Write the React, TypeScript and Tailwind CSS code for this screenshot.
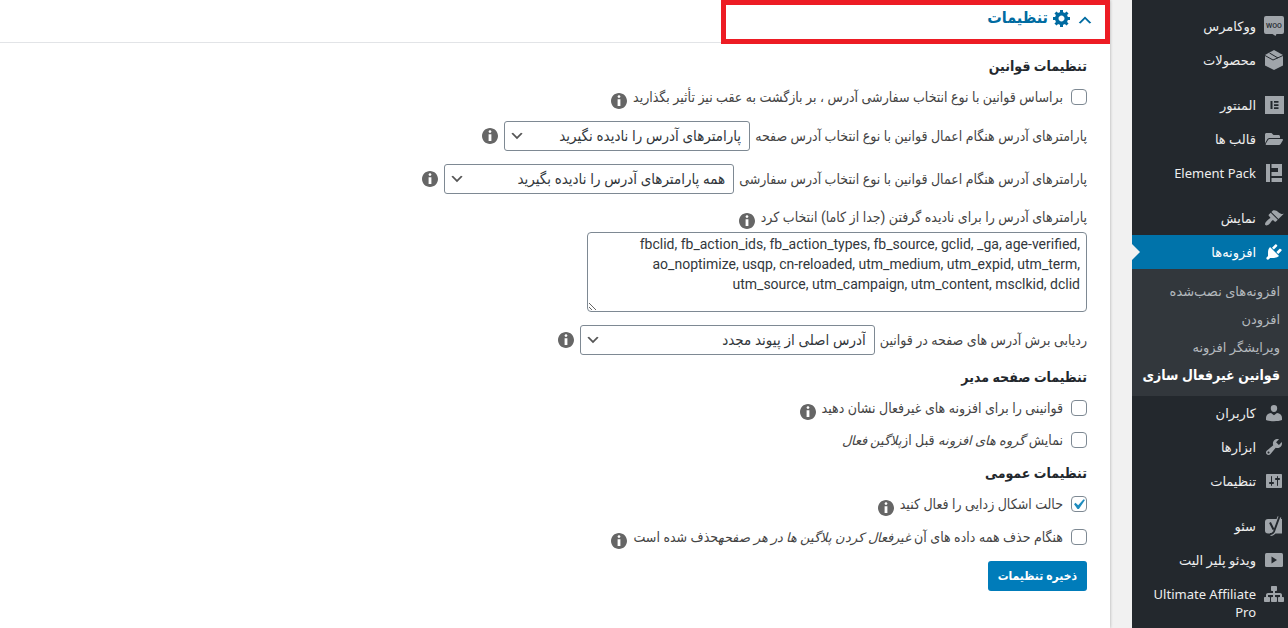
import React from 'react';
import { FaFolderOpen } from 'react-icons/fa';

const dashicons = {
  appearance:
    'M14.48 11.06L7.41 3.99l1.5-1.5c.5-.56 2.3-.47 3.51.32 1.21.8 1.43 1.28 2.91 2.1 1.18.64 2.45 1.26 4.45.85zm-.71.71L6.7 4.7 4.93 6.47c-.39.39-.39 1.02 0 1.41l1.06 1.06c.39.39.39 1.03 0 1.42-.6.6-1.43 1.11-2.21 1.69-.35.26-.7.53-1.01.84C1.43 14.23.4 16.08 1.4 17.07c.99 1 2.84-.03 4.18-1.36.31-.31.58-.66.85-1.02.57-.78 1.08-1.61 1.69-2.21.39-.39 1.02-.39 1.41 0l1.06 1.06c.39.39 1.02.39 1.41 0z',
  plugins:
    'M13.11 4.36L9.87 7.6 8 5.73l3.24-3.24c.35-.34 1.05-.2 1.56.32.52.51.66 1.21.31 1.55zm-8 1.77l.91-1.12 9.01 9.01-1.19.84c-.71.71-2.63 1.16-3.82 1.16H6.14L4.9 17.26c-.59.59-1.54.59-2.12 0-.59-.58-.59-1.53 0-2.12l1.24-1.24v-3.88c0-1.13.4-3.19 1.09-3.89zm7.26 3.97l3.24-3.24c.34-.35 1.04-.21 1.55.31.52.51.66 1.21.31 1.55l-3.24 3.25z',
  users:
    'M10 9c-2 0-3.200-1.600-3.200-3.800C6.800 3.100 8 2 10 2s3.200 1.100 3.200 3.200C13.200 7.400 12 9 10 9zM7 10l3 2.300L13 10c3 .2 5 2.200 5 4.800V17c-2 .8-5 1.200-8 1.200S4 17.800 2 17v-2.200C2 12.200 4 10.200 7 10z',
  tools:
    'M16.68 9.77c-1.34 1.34-3.3 1.67-4.95.99l-5.41 6.52c-.99.99-2.59.99-3.58 0s-.99-2.59 0-3.57l6.52-5.42c-.68-1.65-.35-3.61.99-4.95 1.28-1.28 3.12-1.62 4.72-1.06l-2.89 2.89 2.82 2.82 2.86-2.87c.53 1.58.18 3.39-1.08 4.65zM3.81 16.21c.4.39 1.04.39 1.43 0 .4-.4.4-1.04 0-1.43-.39-.4-1.03-.4-1.43 0-.39.39-.39 1.03 0 1.43z',
  settings:
    'M18 16V4c0-.55-.45-1-1-1H3c-.55 0-1 .45-1 1v12c0 .55.45 1 1 1h14c.55 0 1-.45 1-1zM8 11h1c.55 0 1 .45 1 1s-.45 1-1 1H8v1.5c0 .28-.22.5-.5.5s-.5-.22-.5-.5V13H6c-.55 0-1-.45-1-1s.45-1 1-1h1V5.5c0-.28.22-.5.5-.5s.5.22.5.5V11zm5-2h-1c-.55 0-1-.45-1-1s.45-1 1-1h1V5.5c0-.28.22-.5.5-.5s.5.22.5.5V7h1c.55 0 1 .45 1 1s-.45 1-1 1h-1v5.5c0 .28-.22.5-.5.5s-.5-.22-.5-.5V9z',
  networking:
    'M18 13h1c.55 0 1 .45 1 1.01v2.98c0 .56-.45 1.01-1 1.01h-4c-.55 0-1-.45-1-1.01v-2.98c0-.56.45-1.01 1-1.01h1v-2h-5v2h1c.55 0 1 .45 1 1.01v2.98c0 .56-.45 1.01-1 1.01H8c-.55 0-1-.45-1-1.01v-2.98c0-.56.45-1.01 1-1.01h1v-2H4v2h1c.55 0 1 .45 1 1.01v2.98C6 17.55 5.55 18 5 18H1c-.55 0-1-.45-1-1.01v-2.98C0 13.45.45 13 1 13h1v-2c0-1.1.9-2 2-2h5V7H8c-.55 0-1-.45-1-1.01V3.01C7 2.45 7.45 2 8 2h4c.55 0 1 .45 1 1.01v2.98C13 6.55 12.55 7 12 7h-1v2h5c1.1 0 2 .9 2 2v2z',
  generic:
    'M18 12h-2.18c-.17.7-.44 1.35-.81 1.93l1.54 1.54-2.1 2.1-1.54-1.54c-.58.36-1.23.63-1.91.79V19H8v-2.18c-.68-.16-1.33-.43-1.91-.79l-1.54 1.54-2.12-2.12 1.54-1.54c-.36-.58-.63-1.23-.79-1.91H1V9.03h2.17c.16-.7.44-1.35.8-1.94L2.43 5.55l2.1-2.1 1.54 1.54c.58-.37 1.24-.64 1.93-.81V2h3v2.18c.68.16 1.33.43 1.91.79l1.54-1.54 2.12 2.12-1.54 1.54c.36.59.64 1.24.8 1.94H18V12zm-8.5 1.5c1.66 0 3-1.34 3-3s-1.34-3-3-3-3 1.34-3 3 1.34 3 3 3z',
  info: 'M10 2c4.42 0 8 3.58 8 8s-3.58 8-8 8-8-3.58-8-8 3.58-8 8-8zm1.400 3.600c0-.77-.63-1.400-1.400-1.400s-1.400.63-1.400 1.400.63 1.400 1.400 1.400 1.400-.63 1.400-1.400zm0 9.400V8.200H8.600V15h2.800z',
  check: 'M14.83 4.89l1.34.94-5.81 8.38H9.02L5.78 9.67l1.34-1.25 2.57 2.4z',
  down: 'M5 6l5 5 5-5 2 1-7 7-7-7 2-1z',
};

const Dashicon: React.FC<{ name: keyof typeof dashicons; className?: string }> = ({
  name,
  className = 'size-5',
}) => (
  <svg viewBox="0 0 20 20" className={`shrink-0 fill-current ${className}`} aria-hidden="true">
    <path d={dashicons[name]} fillRule="evenodd" />
  </svg>
);

const WooIcon = () => (
  <svg viewBox="0 0 20 20" className="size-5 shrink-0 fill-current" aria-hidden="true">
    <path d="M2 0h16a2 2 0 0 1 2 2v14a2 2 0 0 1-2 2h-5.500l-1 2-3-2H2a2 2 0 0 1-2-2V2a2 2 0 0 1 2-2z" />
    <text x="10" y="11.500" textAnchor="middle" className="fill-[#23282d] font-['Roboto',sans-serif] text-[7px] font-medium">
      WOO
    </text>
  </svg>
);

const BoxIcon = () => (
  <svg viewBox="0 0 20 20" className="size-5 shrink-0" aria-hidden="true">
    <path className="fill-current" d="M10 0l9 5v10.500L10 20l-9-4.500V5z" />
    <path className="fill-none stroke-[#23282d]" d="M1 5.500l8 4.500 10-4.500M5.500 3l8.500 5" />
  </svg>
);

const ElementorIcon = () => (
  <svg viewBox="0 0 20 20" className="size-5 shrink-0" aria-hidden="true">
    <path className="fill-current" d="M1 1h19v18H1z" />
    <path className="fill-[#23282d]" d="M6.500 6h2v8h-2zM10 6h4.500v1.700H10zM10 9.200h4.500v1.700H10zM10 12.300h4.500V14H10z" />
  </svg>
);

const ElementPackIcon = () => (
  <svg viewBox="0 0 20 20" className="size-5 shrink-0 fill-current" aria-hidden="true">
    <path d="M2 1h4v18H2zM7.500 1H18v12H7.500V9H14V5H7.500zM7.500 15H18v4H7.500z" />
  </svg>
);

const YoastIcon = () => (
  <svg viewBox="0 0 20 20" className="size-5 shrink-0" aria-hidden="true">
    <path className="fill-current" d="M4 3h14v14.500H4a3 3 0 0 1-3-3V6a3 3 0 0 1 3-3z" />
    <path className="fill-none stroke-current stroke-[4]" d="M15.500 1L10 15.500Q9 18 6.500 18" />
    <path className="fill-none stroke-[#23282d] stroke-2" d="M15.500.5L10 15.500Q9 18 6 18M6 6.500l3.500 7" />
  </svg>
);

const VideoIcon = () => (
  <svg viewBox="0 0 20 20" className="size-5 shrink-0" aria-hidden="true">
    <rect className="fill-current" x="1" y="3" width="18" height="14" rx="1.500" />
    <path className="fill-[#23282d]" d="M7.500 6.500l5.500 3.500-5.500 3.500z" />
  </svg>
);

interface MenuItem {
  label: string;
  icon: React.ReactNode;
}

const menuGroups: MenuItem[][] = [
  [
    { label: 'ووکامرس', icon: <WooIcon /> },
    { label: 'محصولات', icon: <BoxIcon /> },
  ],
  [
    { label: 'المنتور', icon: <ElementorIcon /> },
    { label: 'قالب ها', icon: <FaFolderOpen className="size-5 shrink-0 p-px" /> },
    { label: 'Element Pack', icon: <ElementPackIcon /> },
  ],
  [
    { label: 'نمایش', icon: <Dashicon name="appearance" /> },
    { label: 'افزونه‌ها', icon: <Dashicon name="plugins" /> },
    { label: 'کاربران', icon: <Dashicon name="users" /> },
    { label: 'ابزارها', icon: <Dashicon name="tools" /> },
    { label: 'تنظیمات', icon: <Dashicon name="settings" /> },
  ],
  [
    { label: 'سئو', icon: <YoastIcon /> },
    { label: 'ویدئو پلیر الیت', icon: <VideoIcon /> },
    { label: 'Ultimate Affiliate Pro', icon: <Dashicon name="networking" /> },
  ],
];

const pluginSubmenu = ['افزونه‌های نصب‌شده', 'افزودن', 'ویرایشگر افزونه', 'قوانین غیرفعال سازی'];

const currentItem = 'افزونه‌ها';
const currentSubItem = 'قوانین غیرفعال سازی';

const Sidebar = () => (
  <nav className="flex w-[156px] shrink-0 flex-col gap-[11px] bg-[#23282d] pt-[9px] font-['Noto_Sans','DejaVu_Sans',sans-serif] text-[13px] leading-[18px]">
    {menuGroups.map((group, i) => (
      <ul key={i} className="last:[&>li:last-child>a]:pb-[7px]">
        {group.map(({ label, icon }) => {
          const current = label === currentItem;
          return (
            <li key={label}>
              <a
                href="#"
                className={
                  current
                    ? 'relative flex gap-2 bg-[#0073aa] py-2 pr-1 text-white'
                    : 'flex gap-2 py-2 pr-1 text-[#eee]'
                }
              >
                <span className={current ? '-my-px' : '-my-px text-[#a0a5aa]'}>{icon}</span>
                <span>{label}</span>
                {current && (
                  <span className="absolute top-[9px] left-0 border-y-8 border-l-8 border-y-transparent border-l-[#f1f1f1]" />
                )}
              </a>
              {current && (
                <ul className="bg-[#32373c] pt-2 pb-[7px]">
                  {pluginSubmenu.map((sub) => (
                    <li key={sub}>
                      <a
                        href="#"
                        className={
                          sub === currentSubItem
                            ? "block py-[5px] pr-2 font-['Noto_Sans','DejaVu_Sans_Condensed',sans-serif] text-[14px] leading-[18px] font-bold whitespace-nowrap text-white"
                            : 'block py-[5px] pr-2 whitespace-nowrap text-[#b4b9be]'
                        }
                      >
                        {sub}
                      </a>
                    </li>
                  ))}
                </ul>
              )}
            </li>
          );
        })}
      </ul>
    ))}
  </nav>
);

const Info: React.FC<{ className?: string }> = ({ className = '' }) => (
  <button type="button" aria-label="راهنما" className={`text-[#666] ${className}`}>
    <Dashicon name="info" />
  </button>
);

const SectionTitle: React.FC<{ children: React.ReactNode }> = ({ children }) => (
  <h3 className="mb-[7px] text-[14px] leading-6 font-bold text-[#23282d]">{children}</h3>
);

interface CheckRowProps {
  id: string;
  checked?: boolean;
  info?: boolean;
  children: React.ReactNode;
}

const CheckRow: React.FC<CheckRowProps> = ({ id, checked, info, children }) => (
  <div className="flex h-6 items-center">
    <span className="relative ml-2 size-4">
      <input
        id={id}
        type="checkbox"
        defaultChecked={checked}
        className="peer block size-4 appearance-none rounded-[4px] border border-[#7e8993] bg-white"
      />
      <Dashicon
        name="check"
        className="pointer-events-none absolute -top-[2px] -left-[3px] size-[21px] text-[#1e8cbe] opacity-0 peer-checked:opacity-100"
      />
    </span>
    <label htmlFor={id}>{children}</label>
    {info && <Info className="mt-2 mr-1" />}
  </div>
);

interface SelectRowProps {
  id: string;
  label: string;
  value: string;
  width: string;
}

const SelectRow: React.FC<SelectRowProps> = ({ id, label, value, width }) => (
  <div className="flex items-center">
    <label htmlFor={id}>{label}</label>
    <span className={`relative mr-[5px] ml-1 ${width}`}>
      <select
        id={id}
        className="block h-[30px] w-full appearance-none rounded-[3px] border border-[#7e8993] bg-white pr-2 pl-6 text-[15px] text-[#32373c]"
      >
        <option>{value}</option>
      </select>
      <Dashicon
        name="down"
        className="pointer-events-none absolute top-[7px] left-[5px] size-4 text-[#555]"
      />
    </span>
    <Info />
  </div>
);

const ignoredParams =
  'fbclid, fb_action_ids, fb_action_types, fb_source, gclid, _ga, age-verified, ao_noptimize, usqp, cn-reloaded, utm_medium, utm_expid, utm_term, utm_source, utm_campaign, utm_content, msclkid, dclid';

const SettingsForm = () => (
  <form className="pt-[11px] pr-[23px]" onSubmit={(e) => e.preventDefault()}>
    <section className="mb-[10px]">
      <SectionTitle>تنظیمات قوانین</SectionTitle>
      <CheckRow id="back-button" info>
        براساس قوانین با نوع انتخاب سفارشی آدرس ، بر بازگشت به عقب نیز تأثیر بگذارید
      </CheckRow>
      <div className="mt-3 flex flex-col gap-[13px]">
        <SelectRow
          id="page-params"
          label="پارامترهای آدرس هنگام اعمال قوانین با نوع انتخاب آدرس صفحه"
          value="پارامترهای آدرس را نادیده نگیرید"
          width="w-[246px]"
        />
        <SelectRow
          id="custom-params"
          label="پارامترهای آدرس هنگام اعمال قوانین با نوع انتخاب آدرس سفارشی"
          value="همه پارامترهای آدرس را نادیده بگیرید"
          width="w-[290px]"
        />
      </div>
      <div className="mt-[11px] flex h-6 items-center">
        <label htmlFor="ignored">پارامترهای آدرس را برای نادیده گرفتن (جدا از کاما) انتخاب کرد</label>
        <Info className="mt-2 mr-1" />
      </div>
      <textarea
        id="ignored"
        defaultValue={ignoredParams}
        className="mt-[3px] mb-[13px] block h-20 w-[500px] rounded-[4px] border border-[#7e8993] px-[6px] py-px text-right text-[14px] leading-5 text-[#32373c] [unicode-bidi:plaintext]"
      />
      <SelectRow
        id="redirects"
        label="ردیابی برش آدرس های صفحه در قوانین"
        value="آدرس اصلی از پیوند مجدد"
        width="w-[295px]"
      />
    </section>

    <section className="mb-[9px]">
      <SectionTitle>تنظیمات صفحه مدیر</SectionTitle>
      <div className="flex flex-col gap-2">
        <CheckRow id="inactive-rules" info>
          قوانینی را برای افزونه های غیرفعال نشان دهید
        </CheckRow>
        <CheckRow id="group-names">
          نمایش <em className="text-[13px]">گروه های افزونه</em> قبل از
          <em className="text-[13px]">پلاگین فعال</em>
        </CheckRow>
      </div>
    </section>

    <section>
      <SectionTitle>تنظیمات عمومی</SectionTitle>
      <div className="flex flex-col gap-[9px]">
        <CheckRow id="debug" checked info>
          حالت اشکال زدایی را فعال کنید
        </CheckRow>
        <CheckRow id="delete-data" info>
          هنگام حذف همه داده های آن{' '}
          <em className="text-[13px]">غیرفعال کردن پلاگین ها در هر صفحه</em>حذف شده است
        </CheckRow>
      </div>
    </section>

    <button
      type="submit"
      className="mt-3 block h-[30px] rounded-[3px] bg-[#007cba] px-[10px] text-[12px] font-bold text-white"
    >
      ذخیره تنظیمات
    </button>
  </form>
);

const App: React.FC = () => {
  return (
    <div
      dir="rtl"
      className="flex min-h-screen bg-[#f1f1f1] font-['Roboto','DejaVu_Sans_Condensed','DejaVu_Sans',sans-serif] text-[14px] text-[#444]"
    >
      <Sidebar />
      <main className="relative mr-[22px] grow bg-white shadow-[0_0_3px_rgba(0,0,0,0.3)]">
        <h2 className="h-[43px] border-b border-[#e2e4e7] pr-4 text-[#006ba1]">
          <button type="button" className="flex h-9 items-center text-[16px] font-bold">
            <Dashicon name="down" className="mt-1 size-[18px] rotate-180" />
            <Dashicon name="generic" className="mx-1 size-5" />
            تنظیمات
          </button>
        </h2>
        <div className="pointer-events-none absolute top-0 right-0 h-11 w-[389px] border-5 border-[#ed1c24]" />
        <SettingsForm />
      </main>
    </div>
  );
};

export default App;
